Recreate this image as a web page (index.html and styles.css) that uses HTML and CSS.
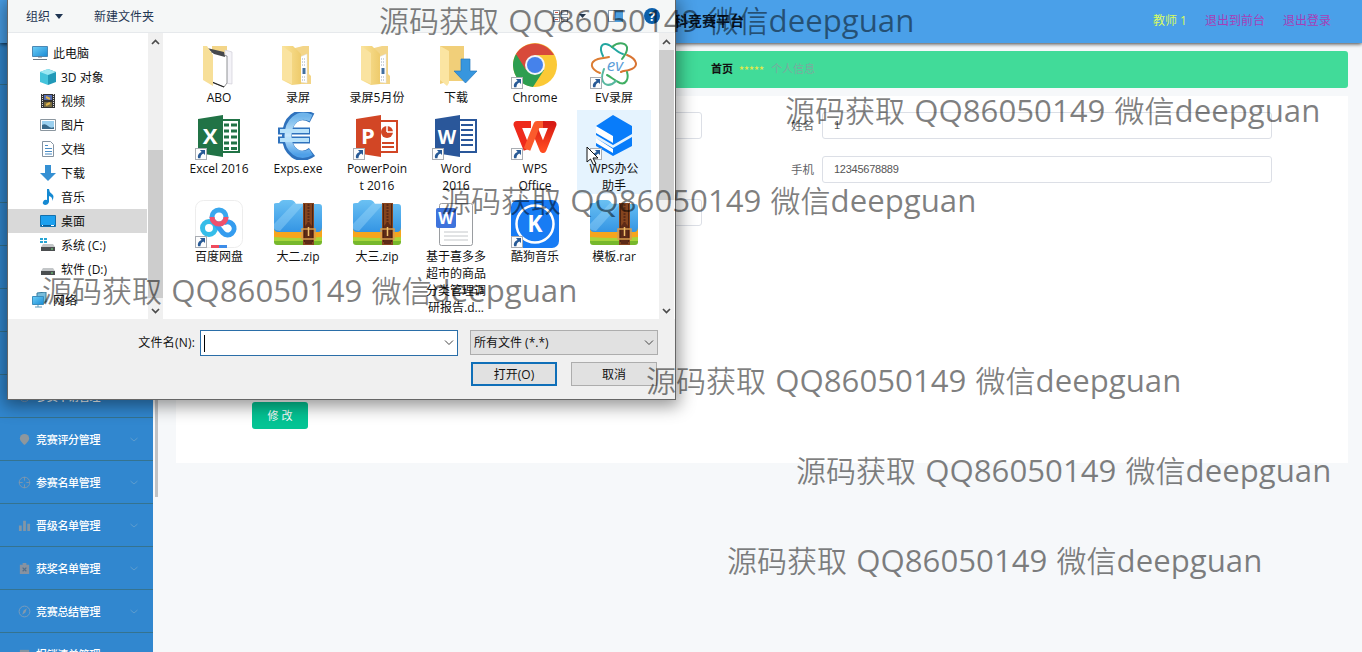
FILE: index.html
```html
<!DOCTYPE html>
<html lang="zh-CN">
<head>
<meta charset="utf-8">
<title>竞赛平台</title>
<link rel="stylesheet" href="styles.css">
</head>
<body>
<svg class="defs" width="0" height="0">
  <defs>
    <linearGradient id="gFold" x1="0" x2="1"><stop offset="0" stop-color="#fbe49b"/><stop offset="1" stop-color="#eecb6c"/></linearGradient>
    <linearGradient id="gEuro" x1="0" y1="0" x2="0" y2="1"><stop offset="0" stop-color="#6fb4ea"/><stop offset=".5" stop-color="#c9e9fc"/><stop offset="1" stop-color="#4fa0e8"/></linearGradient>
    <linearGradient id="gWps" x1="0" y1="0" x2="0" y2="1"><stop offset="0" stop-color="#d71a14"/><stop offset="1" stop-color="#ff4b20"/></linearGradient>
    <linearGradient id="gZip" x1="0" y1="0" x2="0" y2="1"><stop offset="0" stop-color="#6bc1f3"/><stop offset="1" stop-color="#3495e4"/></linearGradient>
    <linearGradient id="gScr" x1="0" y1="0" x2="1" y2="1"><stop offset="0" stop-color="#6ed0f8"/><stop offset="1" stop-color="#198ad4"/></linearGradient>
    <symbol id="lnk" viewBox="0 0 12 12"><rect x=".5" y=".5" width="11" height="11" fill="#fdfdfd" stroke="#a9adb3"/><path d="M5 2h5v5L8.4 5.500C6.500 6.500 5.600 7.800 5.400 10.300H3.200C2.200 7.500 3.700 5 6.600 3.900z" fill="#285a96"/></symbol>
    <symbol id="zip" viewBox="0 0 48 48"><rect x="0" y="26" width="48" height="19" rx="3" fill="#77b82c"/><path d="M0 30h48v11H0z" fill="#a8d53a"/><path d="M0 26h48v11q-24 2-48 0z" fill="#f6a51c"/><path d="M0 4Q0 3 3 3H5Q7 0 9 0H17Q20 0 22 4H45Q48 4 48 7V27Q48 32 44 32H4Q0 32 0 28z" fill="url(#gZip)"/><path d="M0 24L20 3H31L6 31Q0 30 0 28z" fill="#a1d9fa" opacity=".4"/><path d="M29 3h11v42H29z" fill="#85441e"/><path d="M30 4h1v38h-1zM38 4h1v38h-1z" fill="#4b2414"/><path d="M34.500 4v22" stroke="#5d2a17" stroke-width="2" stroke-dasharray="2 1"/><path d="M31 26l3.500-4 3.500 4v18h-7z" fill="#5d2a17"/><rect x="28" y="29" width="13" height="10" fill="none" stroke="#d79c4e" stroke-width="1.500"/><path d="M34.500 27v9" stroke="#f1c16c" stroke-width="1.500"/></symbol>
    <symbol id="filled" viewBox="0 0 48 48"><path d="M17 8l12-3h6v28l2 2v8H17z" fill="#f3d588"/><path d="M26 16l7-3v29l-7-1z" fill="#fff" stroke="#dfe1e4" stroke-width=".5"/><path d="M28 18h4M28 21h4M28 24h4M28 36h4M28 39h4" stroke="#9aa8ba" stroke-dasharray="1 1"/><path d="M30 27v6" stroke="#426f9f" stroke-width="3"/><path d="M8 5h11l8 8v30l-9 1-10-5z" fill="url(#gFold)"/><path d="M8 5l10 7v31l-10-5z" fill="#fae3a0"/></symbol>
  </defs>
</svg>

<header class="header">
  <h1 class="brand">大学生学科竞赛平台</h1>
  <nav class="user"><span class="teacher">教师 1</span><span>退出到前台</span><span>退出登录</span></nav>
</header>

<div class="shell">
  <aside class="sidebar">
    <div class="item first"></div>
    <div class="item second"></div>
    <div class="item"></div><div class="item"></div><div class="item"></div><div class="item"></div>
    <div class="item"><svg class="mi" viewBox="0 0 14 14"><circle cx="7" cy="7" r="5.500" fill="none" stroke="#7f99b5"/></svg><b>参赛申请管理</b><svg class="chev" viewBox="0 0 8 5"><path d="M.5 1L4 4 7.500 1"/></svg></div>
    <div class="item"><svg class="mi" viewBox="0 0 14 14"><path d="M7 1a5 5 0 0 1 5 5c0 3-5 7-5 7S2 9 2 6a5 5 0 0 1 5-5z" fill="#8e979d"/></svg><b>竞赛评分管理</b><svg class="chev" viewBox="0 0 8 5"><path d="M.5 1L4 4 7.500 1"/></svg></div>
    <div class="item"><svg class="mi" viewBox="0 0 14 14"><circle cx="7" cy="7" r="5.700" fill="none" stroke="#7d96ad"/><path d="M7 1v4M7 9v4M1 7h4M9 7h4" stroke="#7d96ad"/></svg><b>参赛名单管理</b><svg class="chev" viewBox="0 0 8 5"><path d="M.5 1L4 4 7.500 1"/></svg></div>
    <div class="item"><svg class="mi" viewBox="0 0 14 14"><path d="M1 7h3v6H1zM5.500 2h3v11h-3zM10 5h3v8h-3z" fill="#8296a6"/></svg><b>晋级名单管理</b><svg class="chev" viewBox="0 0 8 5"><path d="M.5 1L4 4 7.500 1"/></svg></div>
    <div class="item"><svg class="mi" viewBox="0 0 14 14"><path d="M2 3h3V1h4v2h3v10H2z" fill="#8792a0"/><path d="M5 6l4 4M9 6l-4 4" stroke="#526f8a" stroke-width="1.300"/></svg><b>获奖名单管理</b><svg class="chev" viewBox="0 0 8 5"><path d="M.5 1L4 4 7.500 1"/></svg></div>
    <div class="item"><svg class="mi" viewBox="0 0 14 14"><circle cx="7" cy="7" r="5.800" fill="none" stroke="#7d9dba"/><path d="M9.500 3.500L8 8l-3.500 2.500L6 6z" fill="#8299ad"/></svg><b>竞赛总结管理</b><svg class="chev" viewBox="0 0 8 5"><path d="M.5 1L4 4 7.500 1"/></svg></div>
    <div class="item"><svg class="mi" viewBox="0 0 14 14"><path d="M2 2h10v10H2z" fill="#8494a1"/></svg><b>报销清单管理</b><svg class="chev" viewBox="0 0 8 5"><path d="M.5 1L4 4 7.500 1"/></svg></div>
  </aside>
  <div class="side-scroll"></div>
  <main class="main">
    <div class="crumbs"><b>首页</b><span class="stars">★★★★★</span><span class="here">个人信息</span></div>
    <section class="card">
      <div class="row"><div class="input"></div><label>姓名</label><div class="input">1</div></div>
      <div class="row"><div class="blank"></div><label>手机</label><div class="input">12345678889</div></div>
      <div class="row"><div class="input"></div></div>
      <button class="submit">修 改</button>
    </section>
  </main>
</div>

<div class="dialog">
  <div class="tools">
    <span>组织</span><i class="tri"></i><span class="newf">新建文件夹</span>
    <svg class="toolicons" width="110" height="20" viewBox="0 0 110 20"><g fill="#fff" stroke="#8792a0"><rect x=".5" y="4.500" width="6" height="4"/><rect x="8.500" y="4.500" width="6" height="4"/><rect x=".5" y="11.500" width="6" height="4"/><rect x="8.500" y="11.500" width="6" height="4"/></g><path d="M2 6.500h3M2 13.500h3" stroke="#c94f40"/><path d="M26 8h7l-3.500 4z" fill="#26384d"/><rect x="55.500" y="4.500" width="14" height="11" fill="#fff" stroke="#8798aa"/><path d="M62 5h8v11h-8z" fill="#4e9fdf"/><circle cx="99" cy="10" r="8" fill="#0b5fab"/><text x="99" y="14.500" text-anchor="middle" class="qm">?</text></svg>
  </div>
  <div class="body">
    <ul class="tree">
      <li class="root"><svg viewBox="0 0 16 16"><path d="M.5 1.500h15v10H.5z" fill="url(#gScr)" stroke="#4c88b4"/><path d="M1 14.500h14M6 12h4" stroke="#6c7985"/></svg>此电脑</li>
      <li><svg viewBox="0 0 16 16"><path d="M0 3l8-3v16l-8-3z" fill="#45c4dc"/><path d="M8 0l8 3v10l-8 3z" fill="#2199b8"/><path d="M0 3l8-3 8 3-8 3z" fill="#9ce8f3"/></svg>3D 对象</li>
      <li><svg viewBox="0 0 16 16"><path d="M1 1h14v14H1z" fill="#343434"/><path d="M2.500 1v14M13.500 1v14" stroke="#ddd" stroke-dasharray="1 1"/><path d="M4 2h8v5H4z" fill="#546db4"/><path d="M4 9h8v5H4z" fill="#786c40"/><path d="M6 4l4 2M6 12l4-2" stroke="#e0b44b" stroke-width="2"/></svg>视频</li>
      <li><svg viewBox="0 0 16 16"><path d="M.5 2.500h15v11H.5z" fill="#fff" stroke="#8b969f"/><path d="M2 4h12v8H2z" fill="#9bd0ef"/><path d="M2 8q3-2 6 1t6 1v2H2z" fill="#38698a"/></svg>图片</li>
      <li><svg viewBox="0 0 16 16"><path d="M2.500.5h8l3 3v12h-11z" fill="#fff" stroke="#8593a1"/><path d="M5 4.500h3M5 7.500h7M5 10.500h7M5 13h7" stroke="#4a8cc4"/></svg>文档</li>
      <li><svg viewBox="0 0 16 16"><path d="M5 0h6v8h5l-8 8-8-8h5z" fill="#3590d3"/></svg>下载</li>
      <li><svg viewBox="0 0 16 16"><path d="M7 0h2q0 3 3 5t0 7q1-4-3-5v6q-1 3-4 3-3-1-2-3 1-3 4-2z" fill="#1589d2"/></svg>音乐</li>
      <li class="sel"><svg viewBox="0 0 16 16"><path d="M.5 2.500h15v11H.5z" fill="#1ca0ef" stroke="#1470ac"/><path d="M1 12.500h14" stroke="#0a5d98"/><path d="M2 12.500h1M11 12.500h3" stroke="#fff"/></svg>桌面</li>
      <li><svg viewBox="0 0 16 16"><path d="M0 1h3v2H0zM4 1h3v2H4zM0 4h3v2H0zM4 4h3v2H4z" fill="#28a5d4"/><path d="M3 7h10l2 3H1z" fill="#c3c6c8"/><path d="M1 10h14v4H1z" fill="#4b4e50"/><path d="M11 12h2" stroke="#75e37c"/></svg>系统 (C:)</li>
      <li><svg viewBox="0 0 16 16"><path d="M3 7h10l2 3H1z" fill="#c3c6c8"/><path d="M1 10h14v4H1z" fill="#4b4e50"/><path d="M11 12h2" stroke="#75e37c"/></svg>软件 (D:)</li>
      <li class="root net"><svg viewBox="0 0 16 16"><path d="M5 1l9-1v10l-9 1z" fill="#78bddc" stroke="#387c9e"/><path d="M.5 4.500h11v8H.5z" fill="url(#gScr)" stroke="#3b8ebd"/><path d="M3 15h7M6 13v2" stroke="#5f9bba"/></svg>网络</li>
    </ul>
    <div class="sb tree-sb"><svg viewBox="0 0 9 6"><path d="M1 5l3.500-3.500L8 5"/></svg><div class="thumb"></div><svg viewBox="0 0 9 6"><path d="M1 1l3.500 3.500L8 1"/></svg></div>
    <div class="files">
      <div class="tile"><svg viewBox="0 0 48 48"><path d="M17 5h15v8H17z" fill="#f3d588"/><path d="M30 9l7 2v32l-8-1z" fill="#f4f3f8" stroke="#d0cfd8" stroke-width=".7"/><path d="M16 11l16 4v27l-3 4-13-5z" fill="#fff" stroke="#77787c" stroke-width=".8"/><path d="M12 7l17 4 1 5-11-3z" fill="#46484c"/><path d="M17 41l12 5" stroke="#222" stroke-width="1.200"/><path d="M8 5h4l6 9v31l-10-6z" fill="#f7df98"/></svg>ABO</div>
      <div class="tile"><svg><use href="#filled"/></svg>录屏</div>
      <div class="tile"><svg><use href="#filled"/></svg>录屏5月份</div>
      <div class="tile"><svg viewBox="0 0 48 48"><path d="M8 5h24v35H17l-9 3z" fill="#f1cf79"/><path d="M8 5l9 5v32l-2 3-7-6z" fill="#fbe5a2"/><path d="M29 18h9v12h7L33.500 42 22 30h7z" fill="#3796de" stroke="#2778bb" stroke-width=".7"/></svg>下载</div>
      <div class="tile"><svg viewBox="0 0 48 48"><circle cx="24" cy="24" r="22" fill="#fbc936"/><path d="M24 24L5 13A22 22 0 0 0 22 46L33 29z" fill="#2d9e50"/><path d="M5 13A22 22 0 0 1 43 14H24L15 29z" fill="#d84a3b"/><circle cx="24" cy="24" r="10" fill="#f4f5f6"/><circle cx="24" cy="24" r="8" fill="#4582eb"/><use href="#lnk" x="0" y="36" width="12" height="12"/></svg>Chrome</div>
      <div class="tile"><svg viewBox="0 0 48 48"><g fill="none" stroke-width="2" stroke-linecap="round"><path d="M13 15C8 5 13 1 19 4 24 7 28 12 33 13" stroke="#22a6a0"/><path d="M22 6C29 0 38 2 37 8 37 12 34 15 32 18" stroke="#3eaa62"/><path d="M37 14C47 18 50 26 39 29 35 30 33 30 31 31" stroke="#d97432"/><path d="M37 31C39 38 36 44 30 42 24 39 21 36 17 34" stroke="#3fae62"/><path d="M26 40C20 46 13 45 12 37 12 33 13 31 14 28" stroke="#58b8a0"/><path d="M10 32C0 28-1 21 8 18 12 17 15 17 19 16" stroke="#dc7d33"/></g><text x="25" y="30" text-anchor="middle" class="ev">ev</text><use href="#lnk" x="0" y="36" width="12" height="12"/></svg>EV录屏</div>

      <div class="tile"><svg viewBox="0 0 48 48"><path d="M27 8h17v32H27z" fill="#fff" stroke="#217346" stroke-width="2"/><path d="M29 13h5M36 13h6M29 19h5M36 19h6M29 25h5M36 25h6M29 31h5M36 31h6M29 36.500h5M36 36.500h6" stroke="#217346" stroke-width="3"/><path d="M3 7l25-4v42L3 41z" fill="#217346"/><text x="15" y="32" text-anchor="middle" class="office">X</text><use href="#lnk" x="0" y="36" width="12" height="12"/></svg>Excel 2016</div>
      <div class="tile"><svg viewBox="0 0 48 48"><g fill="none"><path d="M38 6C23-2 13 9 13 24S25 50 38 40" stroke="#2f72bd" stroke-width="10"/><path d="M4 19h32M4 28h32" stroke="#2f72bd" stroke-width="7"/><path d="M37 6C24 0 14 10 14 24S25 47 37 40" stroke="url(#gEuro)" stroke-width="7"/><path d="M6 19h29M6 28h29" stroke="#b8e2fb" stroke-width="4"/></g></svg>Exps.exe</div>
      <div class="tile"><svg viewBox="0 0 48 48"><path d="M27 9h17v31H27z" fill="#fff" stroke="#d24625" stroke-width="2"/><circle cx="34" cy="20" r="6" fill="#d24625"/><path d="M34 20v-7M34 20h7" stroke="#fff" stroke-width="1.500"/><path d="M29 31h12M29 35h12" stroke="#d24625" stroke-width="2"/><path d="M3 7l25-4v42L3 41z" fill="#d24625"/><text x="15" y="32" text-anchor="middle" class="office">P</text><use href="#lnk" x="0" y="36" width="12" height="12"/></svg>PowerPoin<br>t 2016</div>
      <div class="tile"><svg viewBox="0 0 48 48"><path d="M27 8h17v32H27z" fill="#fff" stroke="#2a579a" stroke-width="2"/><path d="M29 13h12M29 18h12M29 23h12M29 28h12M29 33h12" stroke="#2a579a" stroke-width="2"/><path d="M3 7l25-4v42L3 41z" fill="#2a579a"/><text x="15" y="32" text-anchor="middle" class="office w">W</text><use href="#lnk" x="0" y="36" width="12" height="12"/></svg>Word<br>2016</div>
      <div class="tile"><svg viewBox="0 0 48 48"><g fill="none" stroke-width="7" stroke-linejoin="round"><path d="M20 12.500H6L16 37.500" stroke="#ee2a1b"/><path d="M30 12.500H42L32 37.500 24 18" stroke="url(#gWps)"/><path d="M16 37.500L26 12.500H32" stroke="#fb5a2c"/></g><use href="#lnk" x="0" y="36" width="12" height="12"/></svg>WPS<br>Office</div>
      <div class="tile hot"><svg viewBox="0 0 48 48"><path d="M6 14l17 10v6L6 21z" fill="#fff"/><path d="M23 3l19 11v8L23 33 6 23v-2l17 10v-7L6 14z" fill="#087cfa"/><path d="M6 26l17 10v6L6 32z" fill="#fff"/><path d="M6 26l17 10 19-11v9L23 44 6 34v-3l17 10v-4z" fill="#087cfa"/><use href="#lnk" x="0" y="36" width="12" height="12"/></svg>WPS办公<br>助手</div>

      <div class="tile"><svg viewBox="0 0 48 48"><rect x=".5" y=".5" width="47" height="47" rx="8" fill="#fff" stroke="#ededed"/><g fill="none" stroke-width="5"><circle cx="14" cy="28" r="6.500" stroke="#35bde9"/><path d="M29 23a6.500 6.500 0 1 1-1 10L20 23" stroke="#349cef"/><circle cx="24" cy="17" r="7" stroke="#39a7ee"/><path d="M17 17a7 7 0 0 0 14 0" stroke="#f0506c"/></g><path d="M16 45h8v3h-8z" fill="#ef4b5d"/><path d="M24 45h8v3h-8z" fill="#3d8de8"/><use href="#lnk" x="0" y="36" width="12" height="12"/></svg>百度网盘</div>
      <div class="tile"><svg><use href="#zip"/></svg>大二.zip</div>
      <div class="tile"><svg><use href="#zip"/></svg>大三.zip</div>
      <div class="tile"><svg viewBox="0 0 48 48"><rect x="7.500" y="3.500" width="33" height="42" rx="2" fill="#fff" stroke="#9a9da1"/><path d="M12 32h24M12 36h24M12 40h24" stroke="#c4c7ca"/><rect x="4" y="8" width="20" height="20" rx="2" fill="#3e73dc"/><text x="14" y="24" text-anchor="middle" class="docw">W</text></svg>基于喜多多<br>超市的商品<br>分类管理调<br>研报告.d...</div>
      <div class="tile"><svg viewBox="0 0 48 48"><rect width="48" height="48" rx="7" fill="#187cf4"/><circle cx="24" cy="24" r="18.500" fill="none" stroke="#fff" stroke-width="2.500"/><text x="24" y="32" text-anchor="middle" class="kg">K</text><use href="#lnk" x="0" y="36" width="12" height="12"/></svg>酷狗音乐</div>
      <div class="tile"><svg><use href="#zip"/></svg>模板.rar</div>
    </div>
    <div class="sb file-sb"><svg viewBox="0 0 9 6"><path d="M1 5l3.500-3.500L8 5"/></svg><div class="thumb"></div><svg viewBox="0 0 9 6"><path d="M1 1l3.500 3.500L8 1"/></svg></div>
  </div>
  <div class="foot">
    <label>文件名(N):</label>
    <div class="name"><i></i><svg viewBox="0 0 10 6"><path d="M1 .5l4 4 4-4"/></svg></div>
    <div class="type">所有文件 (*.*)<svg viewBox="0 0 10 6"><path d="M1 .5l4 4 4-4"/></svg></div>
    <button class="open">打开(O)</button>
    <button class="cancel">取消</button>
  </div>
</div>

<svg class="cursor" width="14" height="20" viewBox="0 0 14 20"><path d="M1 1v15l3.500-3 3 6 2.500-1-3-6h5z" fill="#fff" stroke="#111"/></svg>

<div class="wm w1">源码获取 <i>QQ86050149</i> 微信<i>deepguan</i></div>
<div class="wm w2">源码获取 <i>QQ86050149</i> 微信<i>deepguan</i></div>
<div class="wm w3">源码获取 <i>QQ86050149</i> 微信<i>deepguan</i></div>
<div class="wm w4">源码获取 <i>QQ86050149</i> 微信<i>deepguan</i></div>
<div class="wm w5">源码获取 <i>QQ86050149</i> 微信<i>deepguan</i></div>
<div class="wm w6">源码获取 <i>QQ86050149</i> 微信<i>deepguan</i></div>
<div class="wm w7">源码获取 <i>QQ86050149</i> 微信<i>deepguan</i></div>
</body>
</html>
```

FILE: styles.css
```css
* { box-sizing: border-box; }
html, body { margin: 0; height: 652px; overflow: hidden; }
body {
  position: relative;
  display: flex;
  flex-direction: column;
  background: #f6f8fa;
  font: 12px/17px "Open Sans", "Noto Sans CJK SC", sans-serif;
  color: #111;
}
.defs { position: absolute; }

.header {
  flex: none;
  height: 43px;
  display: flex;
  align-items: center;
  justify-content: space-between;
  padding: 0 31px 2px 618px;
  background: #4aa0e9;
  box-shadow: 0 1px 4px rgba(0, 0, 0, .75);
  z-index: 1;
}
.brand { margin: 0; font-size: 14px; font-weight: 700; color: #071426; }
.user { display: flex; gap: 18px; color: #a63fb8; }
.teacher { color: #d8fb61; }

.shell { flex: 1; min-height: 0; display: flex; }
.sidebar { flex: none; width: 153px; overflow: hidden; background: #3187cf; }
.item {
  height: 43px;
  display: flex;
  align-items: center;
  padding: 0 15px 0 18px;
  border-bottom: 1px solid #35738f;
  color: #fff;
  font-size: 11px;
  letter-spacing: -.3px;
}
.item.first { height: 42px; }
.item.second { height: 118px; }
.item b { flex: 1; font-weight: 500; padding-left: 5px; }
.mi { width: 13px; height: 13px; }
.chev { width: 8px; height: 5px; fill: none; stroke: #5e9cce; }
.side-scroll { flex: none; width: 3px; margin-left: 2px; height: 454px; background: #c1c3c5; }

.main { flex: 1; padding: 8px 14px 0 18px; }
.crumbs {
  height: 37px;
  display: flex;
  align-items: center;
  padding: 0 0 2px 535px;
  border-radius: 3px;
  background: #41db99;
  font-size: 11px;
}
.stars { margin: -2px 7px 0 6px; font-size: 5px; color: #e3e84a; }
.here { color: #7aac9f; }
.card { height: 367px; margin-top: 8px; padding: 16px 76px; background: #fff; }
.row { display: flex; align-items: center; height: 27px; margin-bottom: 17px; }
.row:nth-child(2) { margin-bottom: 16px; }
.row label { width: 120px; padding-right: 8px; text-align: right; font-size: 11.500px; color: #606266; }
.blank { width: 450px; }
.input {
  width: 450px;
  height: 27px;
  padding: 0 11px;
  border: 1px solid #dcdfe6;
  border-radius: 3px;
  line-height: 25px;
  font-family: "Liberation Sans", sans-serif;
  font-size: 11px;
  letter-spacing: -.25px;
  color: #555;
}
.submit {
  display: block;
  width: 56px;
  height: 27px;
  margin: 176px 0 0;
  padding: 0;
  border: 0;
  border-radius: 3px;
  background: #04c494;
  color: #fff;
  font: inherit;
  font-size: 11px;
}

.dialog {
  position: absolute;
  left: 7px;
  top: 0;
  width: 669px;
  height: 400px;
  display: flex;
  flex-direction: column;
  background: #f0f0f0;
  border: 1px solid #666;
  border-top: 0;
  box-shadow: 0 3px 16px 3px rgba(0, 0, 0, .42);
  z-index: 2;
}
.tools {
  flex: none;
  height: 33px;
  display: flex;
  align-items: center;
  padding: 0 13px 0 18px;
  background: #f5f7f7;
  border-bottom: 1px solid #e6e9ec;
  color: #1f3552;
}
.tri { margin-left: 5px; border: 4px solid transparent; border-top: 5px solid #1f3552; border-bottom: 0; }
.newf { margin-left: 31px; }
.toolicons { margin-left: auto; margin-right: -1px; }
.qm { font: 700 13px "Open Sans", sans-serif; fill: #fff; }

.body { flex: none; height: 286px; display: flex; background: #fff; }
.tree { width: 139px; margin: 0; padding: 8px 0 0; list-style: none; }
.tree li { height: 24px; display: flex; align-items: center; padding-left: 32px; white-space: nowrap; }
.tree svg { width: 16px; height: 16px; margin-right: 5px; }
.tree .root { padding-left: 24px; }
.tree .net { margin-top: 7px; }
.tree .sel { background: #d9d9d9; }
.sb { width: 15px; display: flex; flex-direction: column; align-items: center; background: #f0f0f0; padding: 6px 0 5px; }
.sb svg { flex: none; width: 9px; height: 6px; fill: none; stroke: #4b4b4b; stroke-width: 1.700; }
.sb .thumb { width: 15px; background: #cdcdcd; margin-bottom: auto; }
.tree-sb { margin-left: 1px; }
.tree-sb .thumb { height: 148px; margin-top: 105px; }
.file-sb .thumb { height: 150px; margin-top: 5px; }
.files {
  width: 496px;
  display: grid;
  grid-template-columns: repeat(6, 74px);
  grid-template-rows: 71px 88px 121px;
  column-gap: 5px;
  padding: 6px 0 0 19px;
}
.tile { display: flex; flex-direction: column; align-items: center; padding-top: 2px; text-align: center; white-space: nowrap; }
.tile svg { flex: none; width: 48px; height: 48px; }
.hot { height: 84px; background: #e5f3fe; }
.ev { font: italic 400 17px "Open Sans", sans-serif; fill: #5b9ed8; }
.office { font: 700 22px "Open Sans", sans-serif; fill: #fff; }
.office.w { font-size: 19px; }
.docw { font: 700 16px "Open Sans", sans-serif; fill: #fff; }
.kg { font: 700 23px "Open Sans", sans-serif; fill: #fff; }

.foot {
  flex: 1;
  display: grid;
  grid-template-columns: 187px 258px 13px 86px 14px 87px;
  grid-template-rows: 26px 24px;
  row-gap: 6px;
  padding: 11px 0 0 5px;
}
.foot label { padding-right: 5px; text-align: right; line-height: 25px; letter-spacing: .2px; }
.name, .type { display: flex; align-items: center; justify-content: space-between; border: 1px solid #2a6ea8; background: #fff; padding: 0 3px; }
.name i { width: 1px; height: 17px; background: #000; }
.type { grid-column: 4 / 7; margin-left: -1px; height: 25px; border-color: #adadad; background: #e1e1e1; }
.name svg, .type svg { width: 10px; height: 6px; fill: none; stroke: #444; }
.foot button { padding: 0; border: 1px solid #adadad; background: #e1e1e1; font: inherit; color: #111; }
.foot .open { grid-column: 4; border: 2px solid #0f6fb8; }
.foot .cancel { grid-column: 6; margin-right: 1px; }

.cursor { position: absolute; left: 586px; top: 146px; z-index: 3; }

.wm {
  position: absolute;
  z-index: 4;
  height: 40px;
  font: 350 30px/40px "Noto Sans CJK SC DemiLight", "Noto Sans CJK SC", sans-serif;
  color: rgba(0, 0, 0, .5);
  white-space: pre;
  word-spacing: 2.500px;
}
.wm i { font: 400 31.200px/40px "Open Sans", sans-serif; }
.w1 { left: 379px; top: -1px; }
.w2 { left: 785px; top: 89px; }
.w3 { left: 441px; top: 179px; }
.w4 { left: 42px; top: 269px; }
.w5 { left: 646px; top: 359px; }
.w6 { left: 796px; top: 449px; }
.w7 { left: 727px; top: 539px; }
```
